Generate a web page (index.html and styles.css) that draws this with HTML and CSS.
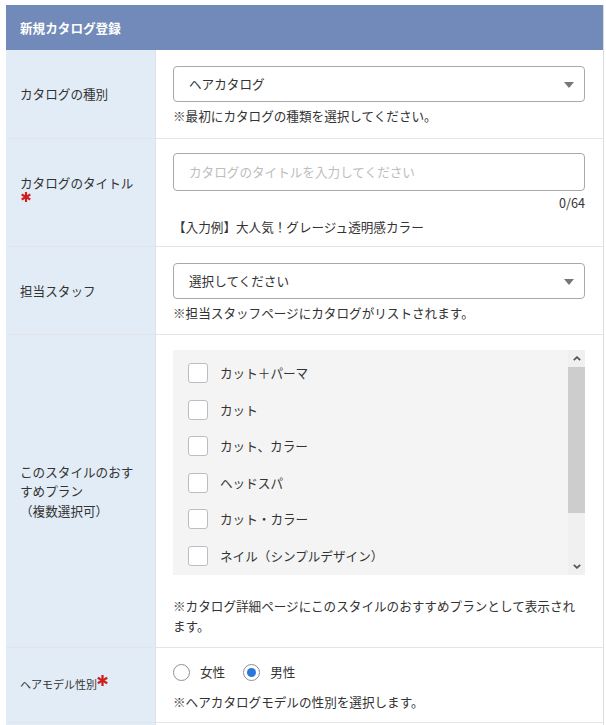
FILE: index.html
```html
<!DOCTYPE html>
<html lang="ja">
<head>
<meta charset="utf-8">
<title>新規カタログ登録</title>
<link rel="stylesheet" href="styles.css">
</head>
<body>
<div class="panel">
  <div class="panel-head">新規カタログ登録</div>
  <div class="form">
    <div class="row">
      <div class="label">カタログの種別</div>
      <div class="field f1">
        <div class="select"><span>ヘアカタログ</span><span class="caret"></span></div>
        <p class="note">※最初にカタログの種類を選択してください。</p>
      </div>
    </div>
    <div class="row">
      <div class="label">カタログのタイトル<span class="req"><svg viewBox="0 0 10 10" width="10" height="10"><g stroke="#cf1f1f" stroke-width="2.1" stroke-linecap="butt"><line x1="5" y1="0" x2="5" y2="10"/><line x1="0.7" y1="2.5" x2="9.3" y2="7.5"/><line x1="0.7" y1="7.5" x2="9.3" y2="2.5"/></g></svg></span></div>
      <div class="field f2">
        <div class="input">カタログのタイトルを入力してください</div>
        <p class="counter">0/64</p>
        <p class="example">【入力例】大人気！グレージュ透明感カラー</p>
      </div>
    </div>
    <div class="row">
      <div class="label">担当スタッフ</div>
      <div class="field f3">
        <div class="select"><span>選択してください</span><span class="caret"></span></div>
        <p class="note">※担当スタッフページにカタログがリストされます。</p>
      </div>
    </div>
    <div class="row">
      <div class="label">このスタイルのおすすめプラン<br>（複数選択可）</div>
      <div class="field f4">
        <div class="listbox">
          <ul class="items">
            <li><span class="check"></span>カット＋パーマ</li>
            <li><span class="check"></span>カット</li>
            <li><span class="check"></span>カット、カラー</li>
            <li><span class="check"></span>ヘッドスパ</li>
            <li><span class="check"></span>カット・カラー</li>
            <li><span class="check"></span>ネイル（シンプルデザイン）</li>
          </ul>
          <div class="scrollbar">
            <div class="sb-btn"><svg viewBox="0 0 8 5" width="8" height="5"><polyline points="0.8,4.2 4,1.2 7.2,4.2" fill="none" stroke="#555" stroke-width="1.8"/></svg></div>
            <div class="sb-track"><div class="sb-thumb"></div></div>
            <div class="sb-btn"><svg viewBox="0 0 8 5" width="8" height="5"><polyline points="0.8,0.8 4,3.8 7.2,0.8" fill="none" stroke="#555" stroke-width="1.8"/></svg></div>
          </div>
        </div>
        <p class="note wide">※カタログ詳細ページにこのスタイルのおすすめプランとして表示されます。</p>
      </div>
    </div>
    <div class="row">
      <div class="label small">ヘアモデル性別<span class="req inline"><svg viewBox="0 0 10 10" width="11" height="11"><g stroke="#cf1f1f" stroke-width="2.1"><line x1="5" y1="0" x2="5" y2="10"/><line x1="0.7" y1="2.5" x2="9.3" y2="7.5"/><line x1="0.7" y1="7.5" x2="9.3" y2="2.5"/></g></svg></span></div>
      <div class="field f5">
        <div class="radios">
          <label class="radio"><span class="dot"></span>女性</label>
          <label class="radio"><span class="dot on"></span>男性</label>
        </div>
        <p class="note r5">※ヘアカタログモデルの性別を選択します。</p>
      </div>
    </div>
    <div class="row">
      <div class="label"></div>
      <div class="field f6"></div>
    </div>
  </div>
</div>
</body>
</html>
```

FILE: styles.css
```css
* { box-sizing: border-box; }
html, body { margin: 0; padding: 0; background: #fff; }
body {
  font-family: "Noto Sans CJK JP", "Noto Sans", sans-serif;
  font-size: 12.6px;
  line-height: 20px;
  color: #333;
}
.panel {
  margin: 5px 0 0 6px;
  width: 598px;
  border-right: 1px solid #dcdcdc;
}
.panel-head {
  height: 45px;
  background: #718ab9;
  color: #fff;
  font-weight: bold;
  padding: 0 14px;
  display: flex;
  align-items: center;
}
.row {
  display: grid;
  grid-template-columns: 150px 1fr;
  border-bottom: 1px solid #e4e4e4;
}
.label {
  background: #e2ecf6;
  border-right: 1px solid #dae3ec;
  padding: 0 14px;
  display: flex;
  flex-wrap: wrap;
  align-content: center;
  line-height: 19.5px;
}
.label.small { font-size: 11px; }
.label br { display: block; width: 100%; }
.req { display: inline-block; width: 100%; line-height: 10px; height: 20px; }
.req svg { display: block; margin-left: 1px; }
.req.inline { width: auto; height: auto; position: relative; top: 0; margin-left: 0; }
.req.inline svg { margin-left: 0; }
.field { padding: 0 18px 0 17px; }
p { margin: 0; }
.select {
  height: 36px;
  border: 1px solid #a9a9a9;
  border-radius: 4px;
  display: flex;
  align-items: center;
  justify-content: space-between;
  padding: 0 10px 0 15px;
  background: #fff;
}
.caret {
  width: 0; height: 0;
  border-left: 5px solid transparent;
  border-right: 5px solid transparent;
  border-top: 6px solid #777;
  margin-top: 1px;
}
.note { margin-top: 4px; }
.f1 { padding-top: 16px; padding-bottom: 12px; }
.f2 { padding-top: 14px; padding-bottom: 9px; }
.f3 { padding-top: 16px; padding-bottom: 11px; }
.f4 { padding-top: 15px; padding-bottom: 11px; }
.f5 { padding-top: 14px; padding-bottom: 10px; }
.f6 { height: 40px; }
.input {
  height: 38px;
  border: 1px solid #a9a9a9;
  border-radius: 4px;
  padding: 0 15px;
  display: flex;
  align-items: center;
  color: #bdbdbd;
}
.counter { text-align: right; margin-top: 2px; }
.example { margin-top: 4px; }
.listbox {
  height: 225px;
  background: #f4f4f4;
  display: flex;
  overflow: hidden;
}
.items {
  list-style: none;
  margin: 0;
  padding: 5px 0 0 15px;
  flex: 1;
}
.items li {
  height: 36.5px;
  display: flex;
  align-items: center;
}
.check {
  width: 20px; height: 20px;
  border: 1.5px solid #bcbcc4;
  border-radius: 3px;
  background: #fff;
  margin-right: 12px;
}
.scrollbar {
  width: 17px;
  display: flex;
  flex-direction: column;
  background: #f0f0f0;
}
.sb-btn {
  height: 17px;
  display: flex;
  align-items: center;
  justify-content: center;
}
.sb-track { flex: 1; }
.sb-thumb { height: 146px; background: #cdcdcd; }
.note.wide { margin-top: 21px; }
.radios { display: flex; align-items: center; height: 20px; }
.radio { display: flex; align-items: center; margin-right: 18px; }
.dot {
  width: 17px; height: 17px;
  border: 1px solid #8f8f8f;
  border-radius: 50%;
  background: #fff;
  margin-right: 10px;
  display: flex;
  align-items: center;
  justify-content: center;
}
.dot.on::after {
  content: "";
  width: 9px; height: 9px;
  border-radius: 50%;
  background: #2b77d9;
}
.note.r5 { margin-top: 10px; }
```
